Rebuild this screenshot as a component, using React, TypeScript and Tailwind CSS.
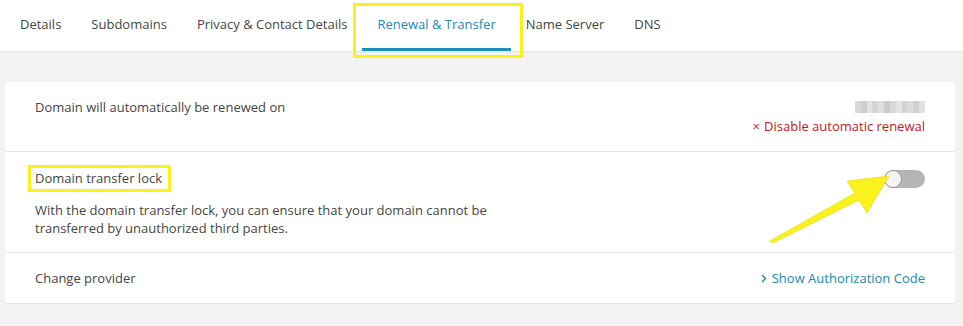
const tabs = ['Details', 'Subdomains', 'Privacy & Contact Details', 'Renewal & Transfer', 'Name Server', 'DNS'];

const blur = ['#d8d8d8', '#cfcfcf', '#e2e2e2', '#d4d4d4', '#dedede', '#cbcbcb', '#d9d9d9', '#e4e4e4', '#d2d2d2', '#dcdcdc', '#d0d0d0', '#e0e0e0'];

function BlurredDate() {
  return (
    <div className="flex h-[12px] w-[70px] overflow-hidden">
      {blur.map((c, i) => (
        <span key={i} className="h-full flex-1" style={{ backgroundColor: c }} />
      ))}
    </div>
  );
}

function Toggle() {
  return (
    <div className="relative h-[18px] w-[41px] rounded-full bg-[#b3b5b7]">
      <span className="absolute left-0 top-0 h-[18px] w-[18px] rounded-full border border-[#9a9a9a] bg-[#f4f4f4]" />
    </div>
  );
}

export default function App() {
  return (
    <div className="relative h-[326px] w-[963px] overflow-hidden bg-[#f3f3f3] font-['Open_Sans',sans-serif] text-[13px] leading-[18px] text-[#454545]">
      <nav className="flex h-[51px] bg-white px-[5px] shadow-[0_1px_2px_rgba(0,0,0,0.08)]">
        {tabs.map((t) => (
          <div
            key={t}
            className={
              t === 'Renewal & Transfer'
                ? 'flex h-full items-start border-b-[3px] border-[#1f8fc0] px-[15px] pt-[15px] text-[#2189b8]'
                : 'flex h-full items-start px-[15px] pt-[15px]'
            }
          >
            {t}
          </div>
        ))}
      </nav>

      <div className="px-[5px] pt-[31px]">
        <div className="w-[950px] bg-white">
          <div className="flex justify-between border-b border-[#e6e6e6] px-[30px] pb-[16px] pt-[16px]">
            <p>Domain will automatically be renewed on</p>
            <div className="flex flex-col items-end gap-[1px]">
              <div className="flex h-[18px] items-center">
                <BlurredDate />
              </div>
              <p className="text-[#c8161d]">
                <span className="mr-[4px]">×</span>Disable automatic renewal
              </p>
            </div>
          </div>

          <div className="flex justify-between border-b border-[#e6e6e6] px-[30px] pb-[15px] pt-[17px]">
            <div>
              <p>Domain transfer lock</p>
              <p className="mt-[14px] w-[480px]">
                With the domain transfer lock, you can ensure that your domain cannot be transferred by unauthorized third parties.
              </p>
            </div>
            <div className="pt-[1px]">
              <Toggle />
            </div>
          </div>

          <div className="flex justify-between border-b border-[#e6e6e6] px-[30px] pb-[16px] pt-[16px]">
            <p>Change provider</p>
            <p className="flex items-center text-[#2287b6]">
              <svg width="6" height="9" viewBox="0 0 6 9" className="mr-[5px]">
                <path d="M1 1l3.5 3.5L1 8" fill="none" stroke="currentColor" strokeWidth="1.4" />
              </svg>
              Show Authorization Code
            </p>
          </div>
        </div>
      </div>

      <div className="pointer-events-none absolute left-[353px] top-[3px] h-[55px] w-[170px] border-[3px] border-[#f7f21a]" />
      <div className="pointer-events-none absolute left-[28px] top-[165px] h-[27px] w-[143px] border-[3px] border-[#f7f21a]" />

      <svg className="pointer-events-none absolute left-0 top-0" width="963" height="326">
        <polygon
          points="770,241 773,243 859,200 867,213 889,176 847,181 855,193"
          fill="#f9f21c"
          stroke="#e0d800"
          strokeWidth="0.6"
        />
      </svg>
    </div>
  );
}
